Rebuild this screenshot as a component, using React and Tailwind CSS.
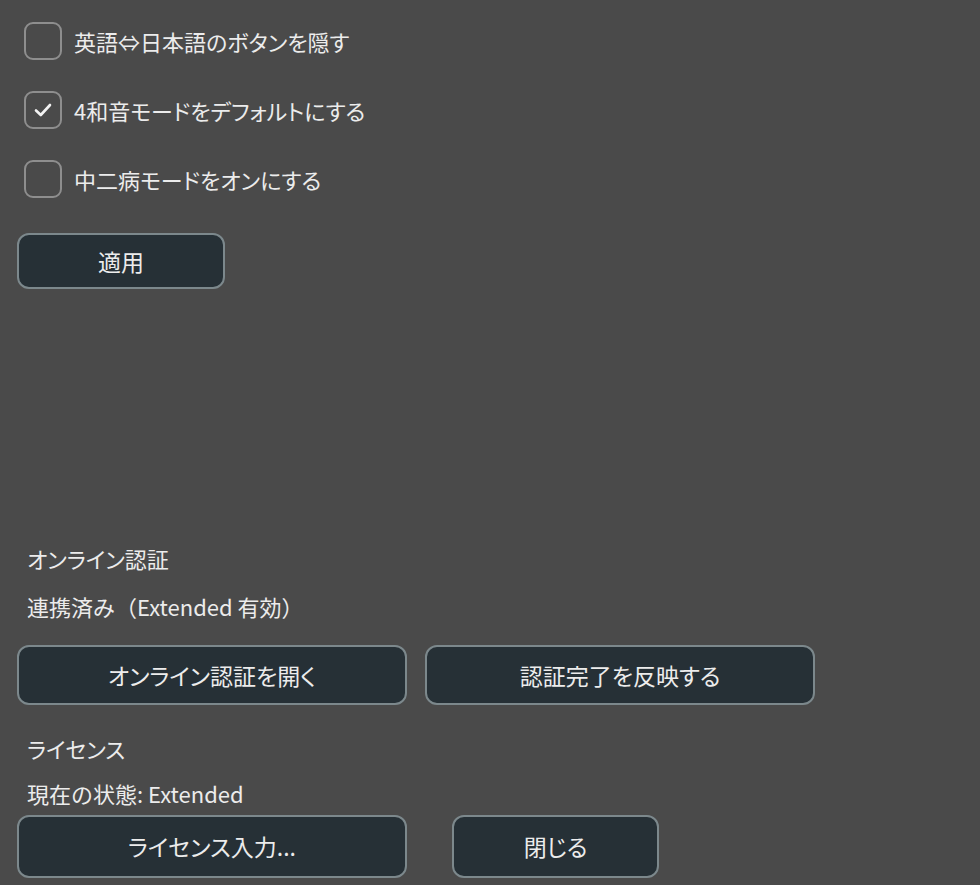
const font = { fontFamily: '"Noto Sans CJK JP", "Noto Sans", sans-serif' };

function Check({ checked, label }) {
  return (
    <label className="flex items-center gap-3 h-[39px] pl-[7px]">
      <span className="flex items-center justify-center w-[38px] h-[38px] rounded-[9px] border-2 border-[#8e8e8e] shrink-0">
        {checked && (
          <svg width="18" height="14" viewBox="0 0 18 14">
            <polyline
              points="2,7.5 6.8,12 16,2"
              fill="none"
              stroke="#f2f2f2"
              strokeWidth="2.6"
              strokeLinecap="round"
              strokeLinejoin="round"
            />
          </svg>
        )}
      </span>
      <span className="text-[22px] leading-none text-[#ececec] [font-feature-settings:'palt']">
        {label}
      </span>
    </label>
  );
}

function Btn({ children, className }) {
  return (
    <button
      className={
        "flex items-center justify-center rounded-[12px] border-2 border-[#7c888c] bg-[#263036] text-[23px] text-[#ececec] [font-feature-settings:'palt'] " +
        className
      }
    >
      {children}
    </button>
  );
}

export default function App() {
  return (
    <div
      className="flex flex-col h-[885px] w-[980px] bg-[#4a4a4a] px-[17px] pt-[21px] pb-[7px] overflow-hidden"
      style={font}
    >
      <div className="flex flex-col gap-[30px]">
        <Check label="英語⇔日本語のボタンを隠す" />
        <Check checked label="4和音モードをデフォルトにする" />
        <Check label="中二病モードをオンにする" />
      </div>
      <Btn className="mt-[35px] w-[208px] h-[56px]">適用</Btn>

      <div className="flex-1" />

      <div className="flex flex-col text-[22px] text-[#ececec]">
        <p className="pl-[10px] leading-[30px] [font-feature-settings:'palt']">オンライン認証</p>
        <p className="pl-[10px] leading-[30px] mt-[18px]">連携済み（Extended 有効）</p>
        <div className="flex gap-[18px] mt-[24px]">
          <Btn className="w-[390px] h-[60px]">オンライン認証を開く</Btn>
          <Btn className="w-[390px] h-[60px]">認証完了を反映する</Btn>
        </div>
        <p className="pl-[10px] leading-[30px] mt-[28px] [font-feature-settings:'palt']">ライセンス</p>
        <p className="pl-[10px] leading-[30px] mt-[15px]">現在の状態: Extended</p>
        <div className="flex gap-[45px] mt-[7px]">
          <Btn className="w-[390px] h-[63px]">ライセンス入力...</Btn>
          <Btn className="w-[207px] h-[63px]">閉じる</Btn>
        </div>
      </div>
    </div>
  );
}
